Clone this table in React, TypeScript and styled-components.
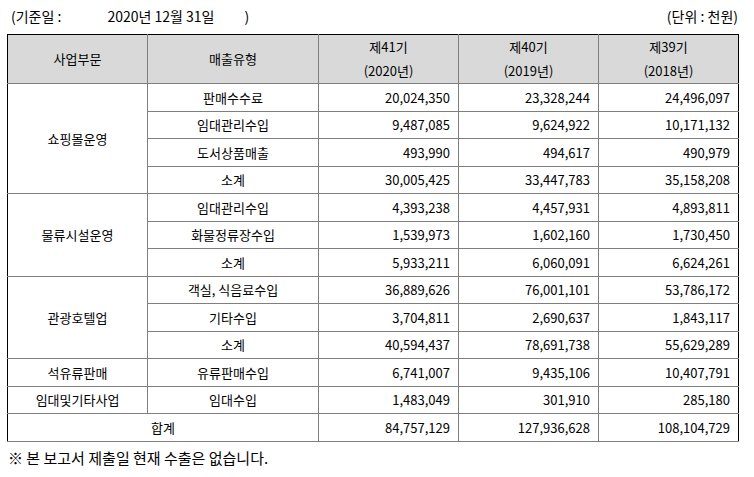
import React from "react";
import styled, { createGlobalStyle } from "styled-components";

const GlobalStyle = createGlobalStyle`
  body {
    margin: 0;
    background: #fff;
    font-family: "Noto Sans CJK KR", "Noto Sans", sans-serif;
    color: #000;
  }
`;

const Page = styled.div`
  width: 754px;
  padding-top: 6px;
`;

const TopLine = styled.div`
  display: flex;
  justify-content: space-between;
  align-items: center;
  height: 20px;
  padding: 0 16px 0 11px;
  font-size: 14px;
  margin-bottom: 8px;
`;

const DateBox = styled.div`
  display: flex;
`;

const DateValue = styled.span`
  margin-left: 46px;
`;

const DateClose = styled.span`
  margin-left: 30px;
`;

const Table = styled.table`
  margin-left: 7px;
  width: 731px;
  border-collapse: collapse;
  border: 1px solid #000;
  table-layout: fixed;
  font-size: 13px;
`;

const Head = styled.th`
  background: #d9d9d9;
  font-weight: normal;
  height: 47px;
  line-height: 24px;
  border: 1px solid #7f7f7f;
  border-top-color: #000;
  padding: 0;
  text-align: center;
  &:first-child { border-left-color: #000; }
  &:last-child { border-right-color: #000; }
`;

const Cell = styled.td<{ $num?: boolean }>`
  height: 26.5px;
  border: 1px solid #7f7f7f;
  padding: 0 ${(p) => (p.$num ? "8px" : "0")} 0 0;
  text-align: ${(p) => (p.$num ? "right" : "center")};
  white-space: nowrap;
  &:first-child { border-left-color: #000; }
  &:last-child { border-right-color: #000; }
`;

const Note = styled.div`
  padding: 5px 0 0 8px;
  font-size: 15px;
`;

type Row = { group?: string; span?: number; label: string; values: string[]; total?: boolean };

const rows: Row[] = [
  { group: "쇼핑몰운영", span: 4, label: "판매수수료", values: ["20,024,350", "23,328,244", "24,496,097"] },
  { label: "임대관리수입", values: ["9,487,085", "9,624,922", "10,171,132"] },
  { label: "도서상품매출", values: ["493,990", "494,617", "490,979"] },
  { label: "소계", values: ["30,005,425", "33,447,783", "35,158,208"] },
  { group: "물류시설운영", span: 3, label: "임대관리수입", values: ["4,393,238", "4,457,931", "4,893,811"] },
  { label: "화물정류장수입", values: ["1,539,973", "1,602,160", "1,730,450"] },
  { label: "소계", values: ["5,933,211", "6,060,091", "6,624,261"] },
  { group: "관광호텔업", span: 3, label: "객실, 식음료수입", values: ["36,889,626", "76,001,101", "53,786,172"] },
  { label: "기타수입", values: ["3,704,811", "2,690,637", "1,843,117"] },
  { label: "소계", values: ["40,594,437", "78,691,738", "55,629,289"] },
  { group: "석유류판매", span: 1, label: "유류판매수입", values: ["6,741,007", "9,435,106", "10,407,791"] },
  { group: "임대및기타사업", span: 1, label: "임대수입", values: ["1,483,049", "301,910", "285,180"] },
  { total: true, label: "합계", values: ["84,757,129", "127,936,628", "108,104,729"] },
];

const App: React.FC = () => (
  <Page>
    <GlobalStyle />
    <TopLine>
      <DateBox>
        <span>(기준일 :</span>
        <DateValue>2020년 12월 31일</DateValue>
        <DateClose>)</DateClose>
      </DateBox>
      <span>(단위 : 천원)</span>
    </TopLine>
    <Table>
      <colgroup>
        <col style={{ width: 140 }} />
        <col style={{ width: 171 }} />
        <col style={{ width: 140 }} />
        <col style={{ width: 140 }} />
        <col style={{ width: 140 }} />
      </colgroup>
      <thead>
        <tr>
          <Head>사업부문</Head>
          <Head>매출유형</Head>
          <Head>제41기<br />(2020년)</Head>
          <Head>제40기<br />(2019년)</Head>
          <Head>제39기<br />(2018년)</Head>
        </tr>
      </thead>
      <tbody>
        {rows.map((r, i) => (
          <tr key={i}>
            {r.total ? (
              <Cell colSpan={2}>{r.label}</Cell>
            ) : (
              <>
                {r.group && <Cell rowSpan={r.span}>{r.group}</Cell>}
                <Cell>{r.label}</Cell>
              </>
            )}
            {r.values.map((v, j) => (
              <Cell key={j} $num>
                {v}
              </Cell>
            ))}
          </tr>
        ))}
      </tbody>
    </Table>
    <Note>※ 본 보고서 제출일 현재 수출은 없습니다.</Note>
  </Page>
);

export default App;
